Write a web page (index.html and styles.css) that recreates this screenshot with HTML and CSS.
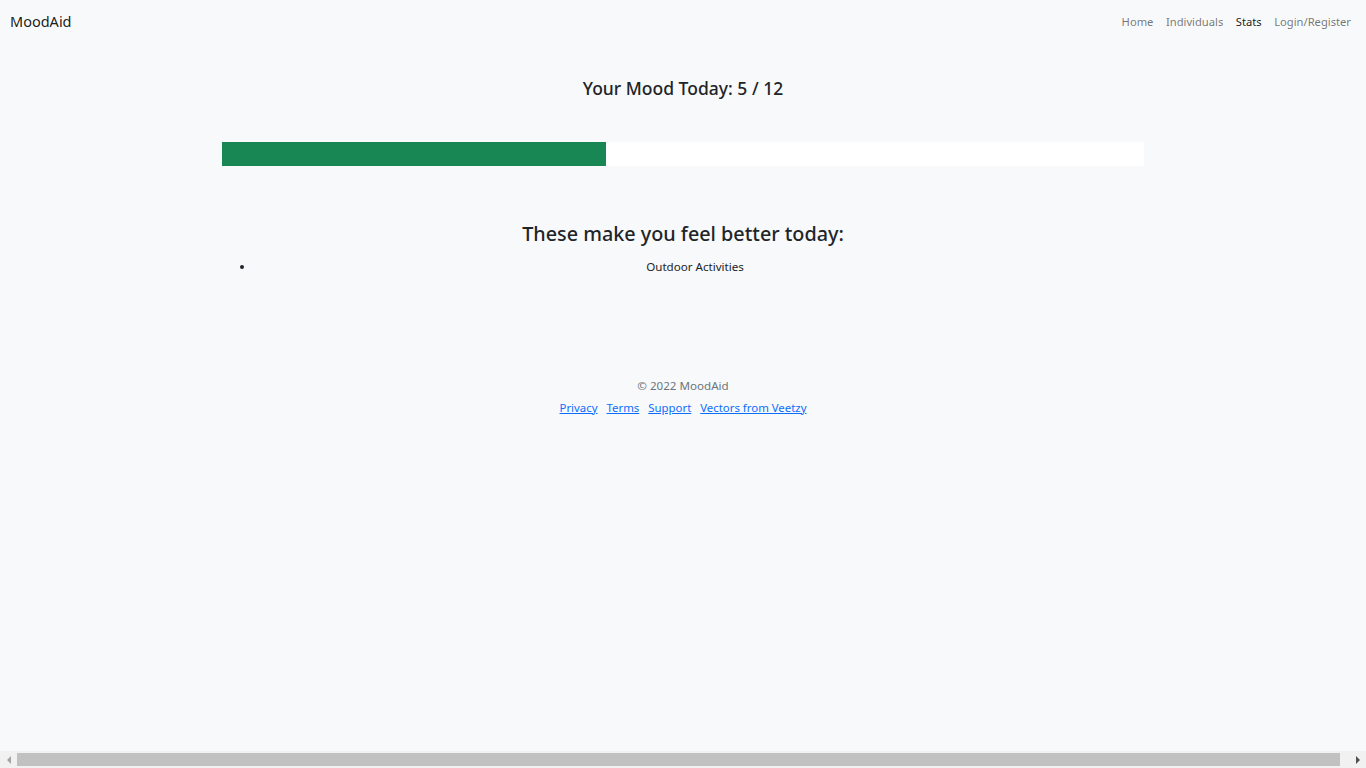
FILE: index.html
```html
<!DOCTYPE html>
<html lang="en">
<head>
    <meta charset="UTF-8">
    <meta name="viewport" content="width=device-width, initial-scale=1.0">
    <title>MoodAid - Stats</title>
    <link rel="stylesheet" href="styles.css">
</head>
<body>

    <!-- Barra di navigazione -->
    <nav class="navbar">
        <a class="brand" href="#">MoodAid</a>
        <ul class="nav-links">
            <li><a href="#">Home</a></li>
            <li><a href="#">Individuals</a></li>
            <li><a class="active" href="#">Stats</a></li>
            <li><a href="#">Login/Register</a></li>
        </ul>
    </nav>

    <!-- Contenuto principale -->
    <main class="container">
        <h4 class="mood-title">Your Mood Today: 5 / 12</h4>

        <div class="progress">
            <div class="progress-bar" style="width: 41.667%;"></div>
        </div>

        <h3 class="better-title">These make you feel better today:</h3>
        <ul class="better-list">
            <li>Outdoor Activities</li>
        </ul>
    </main>

    <!-- Footer -->
    <footer class="footer">
        <p class="copy">&copy; 2022 MoodAid</p>
        <p class="footer-links">
            <a href="#">Privacy</a>
            <a href="#">Terms</a>
            <a href="#">Support</a>
            <a href="#">Vectors from Veetzy</a>
        </p>
    </footer>

    <!-- Barra di scorrimento orizzontale -->
    <div class="hscroll">
        <span class="arrow left"></span>
        <div class="track"><div class="thumb"></div></div>
        <span class="arrow right"></span>
    </div>

</body>
</html>
```

FILE: styles.css
```css
/* Reset */
* {
    margin: 0;
    padding: 0;
    box-sizing: border-box;
}

html, body {
    width: 100%;
    height: 100%;
    overflow: hidden;
}

body {
    background-color: #f8f9fa;
    color: #212529;
    font-family: 'Noto Sans', 'Open Sans', sans-serif;
    font-size: 11.6px;
    line-height: 1.5;
}

a {
    color: #0d6efd;
}

/* Navbar */
.navbar {
    display: flex;
    justify-content: space-between;
    align-items: center;
    height: 43px;
    padding: 1px 15px 0 10px;
}

.brand {
    color: rgba(0, 0, 0, 0.9);
    text-decoration: none;
    font-size: 14.5px;
}

.nav-links {
    display: flex;
    list-style: none;
    gap: 12.5px;
}

.nav-links a {
    color: rgba(0, 0, 0, 0.55);
    text-decoration: none;
    font-size: 11.2px;
}

.nav-links a.active {
    color: rgba(0, 0, 0, 0.9);
}

/* Contenuto */
.container {
    width: 922px;
    margin: 0 auto;
    text-align: center;
}

.mood-title {
    font-size: 17.5px;
    font-weight: 500;
    margin-top: 35px;
    line-height: 1.2;
}

.progress {
    height: 24px;
    background-color: #fff;
    margin-top: 43px;
    text-align: left;
}

.progress-bar {
    height: 100%;
    background-color: #198754;
}

.better-title {
    font-size: 19.8px;
    font-weight: 500;
    margin-top: 56px;
    line-height: 1.2;
}

.better-list {
    list-style: none;
    padding-left: 24px;
    margin-top: 12px;
}

.better-list li {
    position: relative;
}

.better-list li::before {
    content: '';
    position: absolute;
    left: -6px;
    top: 7px;
    width: 4px;
    height: 4px;
    border-radius: 50%;
    background-color: #212529;
}

/* Footer */
.footer {
    margin-top: 102px;
    text-align: center;
}

.copy {
    color: #6c757d;
}

.footer-links {
    margin-top: 4px;
    font-size: 11.4px;
}

.footer-links a {
    margin: 0 3px;
}

/* Scrollbar disegnata */
.hscroll {
    position: fixed;
    left: 0;
    right: 0;
    bottom: 0;
    height: 17px;
    background-color: #f1f1f1;
    display: flex;
    align-items: center;
}

.hscroll .track {
    flex: 1;
    height: 100%;
    padding: 2px 0;
}

.hscroll .thumb {
    width: 99.3%;
    height: 100%;
    background-color: #c1c1c1;
}

.hscroll .arrow {
    width: 17px;
    height: 17px;
    display: flex;
    align-items: center;
    justify-content: center;
}

.hscroll .arrow::before {
    content: '';
    border-top: 4px solid transparent;
    border-bottom: 4px solid transparent;
}

.hscroll .arrow.left::before {
    border-right: 4px solid #a3a3a3;
}

.hscroll .arrow.right::before {
    border-left: 4px solid #505050;
}
```
